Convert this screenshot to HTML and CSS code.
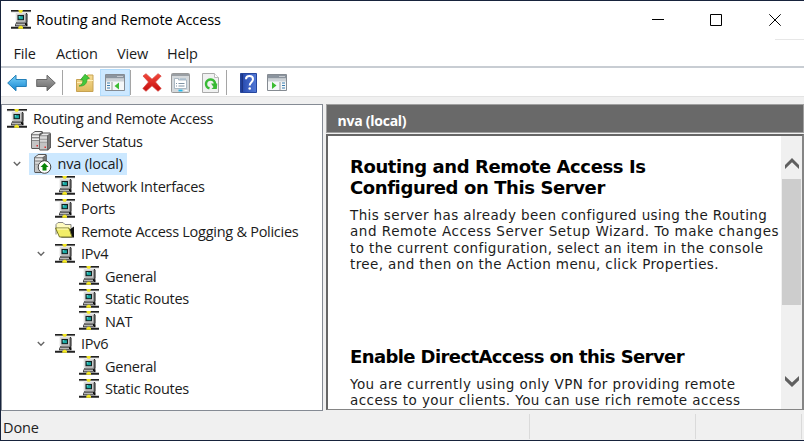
FILE: index.html
```html
<!DOCTYPE html>
<html lang="en">
<head>
<meta charset="utf-8">
<title>Routing and Remote Access</title>
<link rel="stylesheet" href="styles.css">
</head>
<body>
<svg class="defs" width="0" height="0">
  <symbol id="net" viewBox="0 0 20 19">
    <path fill="#222" d="M0 0h20v1.700H0zM0 16.800h20v1.900H0z"/>
    <path fill="#999" d="M0 1.700h20v.5H0z"/>
    <path fill="#111" d="M5 3h10.500l1 1v8.500l-1 .8h1v3H4v-2l1-1z"/>
    <path fill="#c9c9c9" d="M4.800 3.200h10v9.300h-10z"/>
    <path fill="#eee" d="M4.800 3.200h10V4H5.600v8h-.8z"/>
    <path fill="#888" d="M14.500 4h1v8.800H6l1-1h7.500z"/>
    <path fill="#142020" d="M6.500 5h6.500v5.200H6.500z"/>
    <path fill="#18aaa5" d="M7.700 6.200h4.200v3H7.700z"/>
    <path fill="#6be3dc" d="M7.700 6.200h1.500v1.200H7.700z"/>
    <path fill="#b8b8b8" d="M4.500 13.500H14V15H4.500z"/>
    <path fill="#666" d="M4.500 15H15v1H4.500z"/>
    <path fill="#f4e824" d="M7.500 0h4.300v1.500h-.7v1.300H8.200V1.500h-.7zM8.200 15.800h3v1.200h.8v1.800H7.300V17h.9z"/>
  </symbol>
  <symbol id="tower" viewBox="0 0 12 18">
    <path fill="#555" d="M0 3l4-3h7l1 1v14l-3 3H1l-1-1z"/>
    <path fill="#eee" d="M1 3l3-2h7L8 3z"/>
    <path fill="#c4c4c4" d="M.8 3.500H8V17H.8z"/>
    <path fill="#777" d="M8.500 3.200L11.200 1.400v13L8.500 17z"/>
    <path stroke="#888" d="M1 6.500h7M1 9.500h7"/>
    <path stroke="#eee" d="M1 5.500h7M1 8.500h7"/>
    <path fill="#d33" d="M5.500 14h1.500v1.500H5.500z"/>
  </symbol>
  <symbol id="chev" viewBox="0 0 8 6"><path d="M.8 1l3.200 3.200L7.200 1" fill="none" stroke="#666" stroke-width="1.400"/></symbol>
  <linearGradient id="blue" x2="0" y2="1"><stop stop-color="#7cd5fb"/><stop offset="1" stop-color="#1383cf"/></linearGradient>
  <linearGradient id="grey" x2="0" y2="1"><stop stop-color="#aaa"/><stop offset="1" stop-color="#686868"/></linearGradient>
  <linearGradient id="gold" x2="0" y2="1"><stop stop-color="#f7dd95"/><stop offset="1" stop-color="#dfb95e"/></linearGradient>
  <linearGradient id="red" x2="0" y2="1"><stop stop-color="#f4483b"/><stop offset="1" stop-color="#c40d0d"/></linearGradient>
  <linearGradient id="book"><stop stop-color="#1b3687"/><stop offset=".2" stop-color="#2c50b4"/><stop offset="1" stop-color="#5379d6"/></linearGradient>
</svg>
<div class="window">
  <header class="titlebar">
    <svg class="net"><use href="#net"/></svg>
    <h1>Routing and Remote Access</h1>
    <svg class="controls" viewBox="0 0 131 14" fill="none" stroke="#000"><path d="M0 7.500h12M58.500 2.500h11v11h-11zM117.300 2.300l11.400 11.400M128.700 2.300l-11.400 11.400"/></svg>
  </header>
  <div class="edge"></div>
  <nav class="menu"><span class="m1">File</span><span class="m2">Action</span><span class="m3">View</span><span class="m4">Help</span></nav>
  <div class="toolbar">
    <div class="tool t-arrow"><svg width="20" height="18" viewBox="0 0 20 18"><path d="M.7 9L9 1.200V5.500h10.300v7H9v4.300z" fill="url(#blue)" stroke="#237fb8"/></svg></div>
    <div class="tool t-arrow"><svg width="20" height="18" viewBox="0 0 20 18"><path d="M19.300 9L11 1.200V5.500H.7v7H11v4.300z" fill="url(#grey)" stroke="#686868"/></svg></div>
    <i class="sep"></i>
    <div class="tool t-folder"><svg width="18" height="20" viewBox="0 0 18 20"><path d="M.5 6.500h5l1-2h4l1-2.500h5.500V18.500H.5z" fill="url(#gold)" stroke="#c7a252"/><path d="M1 9.500h7l1.500-2H17" stroke="#fff0bb" fill="none"/><path d="M3 13c3-1 4-3 4-6L4.500 7 9 1.200l4.500 4L11 6c0 5-3 7.500-8 7z" fill="#43c93c" stroke="#2c9c28" stroke-width=".7"/></svg></div>
    <div class="tool active"><svg width="20" height="17" viewBox="0 0 20 17"><path d="M.5.500h19v16H.5z" fill="#f5f7f8" stroke="#858b92"/><path d="M1 1h18v3.500H1z" fill="#8b949e"/><path d="M1 5h18v2.500H1z" fill="#ccd1d6"/><path d="M12.500 2.500h1m1 0h1m1 0h1" stroke="#fff"/><path d="M2 9h3M2 11.500h3M2 14h3" stroke="#397caf"/><path d="M7 8v8" stroke="#999"/><path d="M14 8.500v7L9.500 12z" fill="#3cbc31"/></svg></div>
    <i class="sep near"></i>
    <div class="tool t-x"><svg width="20" height="19" viewBox="0 0 20 19"><path d="M1 3l3-2.300 6 5.500L16 .7 19.200 3l-5.700 6 5.700 6.500-3.200 2.800-6-5.500-6 5.500L.8 15.500 6.500 9z" fill="url(#red)" stroke="#d5423c" stroke-width=".7"/></svg></div>
    <div class="tool t-prop"><svg width="19" height="20" viewBox="0 0 19 20"><rect x=".5" y=".5" width="18" height="19" rx="1" fill="#d5d9dc" stroke="#999"/><path d="M1 1h17v2H1z" fill="#9a9fa4"/><path d="M3.500 5.500h4V7h8v8.500h-12z" fill="#fff" stroke="#9aabb8" stroke-width=".8"/><path d="M9 6h6" stroke="#9ab4c9"/><path d="M5 10.500h1m1.500 0h6M5 13h1m1.500 0h6" stroke="#71879a" stroke-width=".9"/><path d="M7.500 17.500h4" stroke="#20bbef" stroke-width="1.800"/><path d="M13.500 17.500h3" stroke="#fff"/></svg></div>
    <div class="tool t-ref"><svg width="17" height="20" viewBox="0 0 17 20"><path d="M.5.500h12l4 4v15H.5z" fill="#f0f1f1" stroke="#aaa"/><path d="M12.500.500v4h4" fill="#fff" stroke="#bbb"/><path d="M7.500 15.300A4.500 4.500 0 1 1 13 11" fill="none" stroke="#38ba35" stroke-width="2.500"/><path d="M9 10.500h6.300l-.5 5.500H9.500l2-2z" fill="#38ba35"/></svg></div>
    <i class="sep s3"></i>
    <div class="tool t-help"><svg width="17" height="20" viewBox="0 0 17 20"><path d="M.5.500h16v19H.5z" fill="url(#book)" stroke="#26469e"/><path d="M2.500 1v18" stroke="#1d3585"/><path d="M6 6.200C6 2 13 2 13 6.200c0 3-3.300 3-3.300 6.300" fill="none" stroke="#fff" stroke-width="2"/><circle cx="9.700" cy="15.500" r="1.300" fill="#fff"/></svg></div>
    <div class="tool t-pane"><svg width="20" height="17" viewBox="0 0 20 17"><path d="M.5.500h19v16H.5z" fill="#f5f7f8" stroke="#858b92"/><path d="M1 1h18v3.500H1z" fill="#8b949e"/><path d="M1 5h18v2.500H1z" fill="#ccd1d6"/><path d="M12.500 2.500h1m1 0h1m1 0h1" stroke="#fff"/><path d="M15 9h3M15 11.500h3M15 14h3" stroke="#397caf"/><path d="M13 8v8" stroke="#999"/><path d="M5 8v7l4.500-3.500z" fill="#3cbc31"/></svg></div>
  </div>
  <main class="main">
    <ul class="tree">
      <li class="l0"><svg class="net"><use href="#net"/></svg><span>Routing and Remote Access</span></li>
      <li class="l1"><svg class="ic" viewBox="0 0 20 20"><use href="#tower" x="0" y="0" width="12" height="18"/><use href="#tower" x="8" y="1" width="12" height="19"/></svg><span>Server Status</span></li>
      <li class="l1 open"><svg class="chev"><use href="#chev"/></svg><div class="selected"><svg class="ic" viewBox="0 0 20 20"><use href="#tower" x="2" y="0" width="13" height="19"/><circle cx="12.500" cy="13" r="6.300" fill="#fff" stroke="#444"/><path d="M12.500 9l4 4h-2v3.500h-4V13h-2z" fill="#078507"/></svg><span>nva (local)</span></div></li>
      <li class="l2"><svg class="net"><use href="#net"/></svg><span>Network Interfaces</span></li>
      <li class="l2"><svg class="net"><use href="#net"/></svg><span>Ports</span></li>
      <li class="l2"><svg class="net" viewBox="0 0 20 18"><path fill="#fffbc0" stroke="#888" d="M1 13V3l2-2h5l2 2h6v4"/><path fill="#111" d="M6 16h13V5l-3 2z"/><path fill="#f2ee68" stroke="#77772a" d="M.5 6.500h13.500l3 9H4.500z"/><path stroke="#fffccf" d="M2 7.500h11"/></svg><span>Remote Access Logging &amp; Policies</span></li>
      <li class="l2 open"><svg class="chev"><use href="#chev"/></svg><svg class="net"><use href="#net"/></svg><span>IPv4</span></li>
      <li class="l3"><svg class="net"><use href="#net"/></svg><span>General</span></li>
      <li class="l3"><svg class="net"><use href="#net"/></svg><span>Static Routes</span></li>
      <li class="l3"><svg class="net"><use href="#net"/></svg><span>NAT</span></li>
      <li class="l2 open"><svg class="chev"><use href="#chev"/></svg><svg class="net"><use href="#net"/></svg><span>IPv6</span></li>
      <li class="l3"><svg class="net"><use href="#net"/></svg><span>General</span></li>
      <li class="l3"><svg class="net"><use href="#net"/></svg><span>Static Routes</span></li>
    </ul>
    <section class="detail">
      <div class="heading">nva (local)</div>
      <div class="pane">
        <article>
          <h2>Routing and Remote Access Is<br>Configured on This Server</h2>
          <p>This server has already been configured using the Routing<br><span class="wide">and Remote Access Server Setup Wizard. To make changes</span><br>to the current configuration, select an item in the console<br>tree, and then on the Action menu, click Properties.</p>
          <h2 class="second">Enable DirectAccess on this Server</h2>
          <p class="last">You are currently using only VPN for providing remote<br>access to your clients. You can use rich remote access</p>
        </article>
        <div class="scroll">
          <svg class="up" width="14" height="13" viewBox="0 0 14 13"><path d="M0 8l7-7 7 7v4L7 5.200 0 12z" fill="#606060"/></svg>
          <div class="thumb"></div>
          <svg class="down" width="14" height="12" viewBox="0 0 14 12"><path d="M0 0l7 6.500L14 0v4.200L7 11 0 4.200z" fill="#606060"/></svg>
        </div>
      </div>
    </section>
  </main>
  <footer class="status"><span class="s-main">Done</span><span class="s-mid"></span><span class="s-end"></span></footer>
</div>
</body>
</html>
```

FILE: styles.css
```css
* { box-sizing: border-box; }
body { margin: 0; width: 804px; height: 441px; overflow: hidden; background: #17233c; font: 14.500px/22px "Open Sans", "Noto Sans", sans-serif; color: #1b1b1b; }
svg { display: block; flex: none; }
.defs { position: absolute; }
.window { height: 441px; border: solid #17233c; border-width: 1px 0 1px 1px; background: #f0f0f0; display: flex; flex-direction: column; }
.titlebar { height: 38px; flex: none; background: #fff; display: flex; align-items: center; padding: 0 0 2px 10px; }
.titlebar h1 { margin: 2px 0 0 5px; font-size: 14.500px; font-weight: 400; color: #000; letter-spacing: -.08px; white-space: nowrap; }
.net { width: 20px; height: 19px; }
.controls { width: 131px; height: 14px; margin: 0 21px 0 auto; }
.edge { height: 1px; flex: none; background: linear-gradient(90deg, #fff 774px, #e7e7e7 0); }
.menu { height: 26px; flex: none; background: #fff; display: flex; padding: 3px 0 0 12.500px; letter-spacing: -.15px; }
.menu span { white-space: nowrap; }
.m1 { width: 42.500px; } .m2 { width: 61px; } .m3 { width: 50px; }
.toolbar { height: 31px; flex: none; background: #fff; border-top: 2px solid #c8cdd3; border-bottom: 1px solid #e3e3e3; display: flex; align-items: center; padding: 1px 0 0 6px; }
.tool { flex: none; display: flex; align-items: center; justify-content: center; }
.t-arrow { width: 29px; justify-content: flex-start; }
.sep { width: 1px; height: 25px; background: #a5a5a5; margin-left: -3px; }
.t-folder { margin-left: 13px; }
.active { width: 30px; height: 27px; background: #cce8ff; border: 1px solid #b3dcfb; margin-left: 6px; }
.near { margin-left: 0; }
.t-x { margin-left: 11px; }
.t-prop { margin-left: 9px; }
.t-ref { margin-left: 12px; }
.s3 { margin-left: 7px; }
.t-help { margin-left: 13px; }
.t-pane { margin-left: 10px; }
.main { height: 314px; flex: none; display: flex; padding-top: 7px; }
.tree { list-style: none; margin: 0; width: 322px; height: 307px; flex: none; background: #fff; border: 1px solid #858b94; padding: 2px 0 0; letter-spacing: -.27px; }
.tree li { height: 22.500px; display: flex; align-items: center; white-space: nowrap; }
.tree span { margin: 1.600px 0 0 6px; }
.l0 { padding-left: 5px; }
.l1 { padding-left: 29px; }
.l2 { padding-left: 53px; }
.l3 { padding-left: 77px; }
.open .chev { margin: 1px 11px 0 -18px; }
.l2.open .chev { margin: 1px 10px 0 -18px; }
.chev { width: 8px; height: 6px; }
.ic { width: 20px; height: 20px; }
.selected { display: flex; align-items: center; height: 22px; background: #cce8ff; margin: 1px 0 0 -3px; padding: 0 4px 0 3px; }
.tree .selected span { margin: 0 0 0 5.500px; letter-spacing: -.2px; }
.detail { flex: 1; margin-left: 3px; display: flex; flex-direction: column; }
.heading { height: 29px; background: #696969; border: 1px solid #a0a0a0; color: #fff; font-size: 14px; font-weight: 700; letter-spacing: -.25px; padding: 5px 0 0 10.500px; }
.pane { height: 276px; margin-top: 1px; background: #fff; border: 2px solid #858585; border-top-color: #666; border-left-color: #666; border-bottom-width: 1px; display: flex; overflow: hidden; }
article { width: 453px; flex: none; padding: 20px 0 0 22px; font-family: "DejaVu Sans", sans-serif; white-space: nowrap; color: #1c1c1c; }
h2 { margin: 0; font-size: 18px; line-height: 21px; letter-spacing: -.4px; color: #000; }
p { margin: 9px 0 0; font-size: 13.500px; line-height: 16.300px; letter-spacing: .39px; }
.wide { letter-spacing: .54px; }
.last { letter-spacing: .43px; }
.second { margin-top: 74px; letter-spacing: -.6px; }
.scroll { flex: 1; background: #f0f0f0; display: flex; flex-direction: column; align-items: center; }
.up { margin-top: 21px; }
.thumb { width: 19px; height: 126px; background: #cdcdcd; margin-top: 9px; }
.down { margin-top: 71px; }
.status { flex: 1; display: flex; padding: 3px 2px 1px; color: #222; }
.status span { border-right: 1px solid #dadada; }
.s-main { width: 527px; padding-top: 3px; letter-spacing: -.1px; }
.s-mid { width: 166px; }
.s-end { flex: 1; }
```
